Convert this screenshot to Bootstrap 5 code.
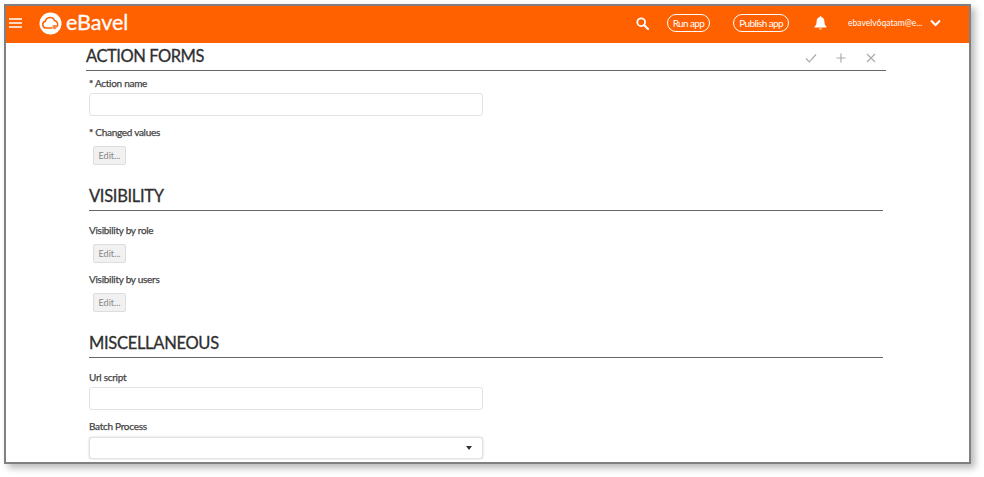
<!DOCTYPE html>
<html lang="en"><head><meta charset="utf-8"><title>eBavel</title>
<link href="https://cdn.jsdelivr.net/npm/bootstrap@5.3.0/dist/css/bootstrap.min.css" rel="stylesheet">
<style>
html,body{margin:0;background:#fff;height:477px;overflow:hidden}
body{font-family:Lato,"Liberation Sans",sans-serif;color:#333}
.shot-frame{width:967px;height:460px;margin:4px 0 0 4px;border:2px solid #808080;box-shadow:4px 4px 7px rgba(0,0,0,.28);overflow:hidden;background:#fff}
.top-bar{height:37px;background:#ff6000;color:#fff;padding:0 0 3px 3px}
.burger{width:13px;margin-right:17px}
.brand-name{font-size:21.5px;font-weight:400;margin-left:4px;line-height:1;-webkit-text-stroke:.3px #fff}
.pill-link{border:1px solid #fff;border-radius:10px;color:#fff;font-size:10px;letter-spacing:-.62px;line-height:16px;height:18px;padding:0 5px;background:transparent}
.user-name{font-size:8.5px;width:76px;white-space:nowrap}
.page-body{padding:0 0 0 80px;width:881px}
.title-row{height:28px;border-bottom:1px solid #666;width:800px}
.title-row h2{font-size:16.5px;letter-spacing:-.45px;font-weight:400;line-height:26px;margin:-2px 0 0;color:#2f2f2f;-webkit-text-stroke:.3px #2f2f2f}
.sub-head{margin:0 0 0 3px;width:794px;border-bottom:1px solid #666;font-size:16.5px;letter-spacing:-.3px;font-weight:400;line-height:27px;height:28px;color:#2f2f2f;-webkit-text-stroke:.3px #2f2f2f}
.field-label{font-size:10px;letter-spacing:-.28px;font-weight:400;-webkit-text-stroke:.25px #444;line-height:13px;margin:0 0 0 3px;color:#444;display:block}
.field-box{display:block;width:394px;height:23px;margin-left:3px;border:1px solid #e2e2e2;border-radius:3px;background:#fff}
.select-box{box-shadow:0 0 2px rgba(0,0,0,.22);position:relative;height:22px}
.select-box::after{content:"";position:absolute;right:10px;top:8px;border:3.5px solid transparent;border-top:4px solid #333;border-bottom:0}
.edit-btn{display:block;margin-left:7px;width:33px;height:19px;padding:0;background:#f1f1f1;border:1px solid #ddd;border-radius:2px;font-size:9px;line-height:17px;color:#888}
.tool-ico{width:12px;height:12px}
</style></head><body>
<div class="shot-frame">
<div class="top-bar d-flex align-items-center">
 <svg class="burger" viewBox="0 0 13 10" height="10"><path d="M0 1h13M0 5h13M0 9h13" stroke="#fff" stroke-width="1.5" fill="none"/></svg>
 <svg width="23" height="23" viewBox="0 0 23 23"><circle cx="11.500" cy="11.500" r="11" fill="#fff"/><path d="M7 16a3.400 3.400 0 0 1-.6-6.700A4.800 4.800 0 0 1 15.500 8.500a3.800 3.800 0 0 1 2 6.500" fill="none" stroke="#ff6000" stroke-width="1.500"/><path d="M7 16h6" stroke="#ff6000" stroke-width="1.500"/><circle cx="15.500" cy="15" r="2.300" fill="#f58a4c"/></svg>
 <span class="brand-name">eBavel</span>
 <div class="ms-auto d-flex align-items-center">
  <svg width="13" height="13" viewBox="0 0 13 13"><circle cx="5.200" cy="5.200" r="3.900" fill="none" stroke="#fff" stroke-width="1.800"/><path d="M8 8l4 4" stroke="#fff" stroke-width="2.200" stroke-linecap="round"/></svg>
  <span class="pill-link" style="margin-left:18px">Run app</span>
  <span class="pill-link" style="margin-left:23px">Publish app</span>
  <svg width="15" height="16" viewBox="0 0 15 16" style="margin-left:24px"><path d="M7.500 1.200c.7 0 1 .4 1 1 2 .5 2.900 2.100 2.900 4.100 0 3 .8 4.200 2.100 5.400v.8H1.500v-.8c1.300-1.200 2.100-2.400 2.100-5.400 0-2 .9-3.600 2.900-4.100 0-.6.3-1 1-1z" fill="#fff"/><path d="M5.800 13.500a1.800 1.600 0 0 0 3.400 0z" fill="#fff"/></svg>
  <span class="user-name" style="margin-left:20px">ebavelv6qatam@e...</span>
  <svg width="11" height="8" viewBox="0 0 11 8" style="margin-left:6px;margin-right:28px"><path d="M1 1.500l4.500 4.500L10 1.500" fill="none" stroke="#fff" stroke-width="2"/></svg>
 </div>
</div>
<div class="page-body">
 <div class="title-row d-flex justify-content-between align-items-center">
  <h2>ACTION FORMS</h2>
  <div class="d-flex align-items-center" style="gap:18px;padding:3px 9px 0 0">
   <svg class="tool-ico" viewBox="0 0 12 12"><path d="M1 6.500l3.300 3.300L11 2.500" fill="none" stroke="#aaa" stroke-width="1.200"/></svg>
   <svg class="tool-ico" viewBox="0 0 12 12"><path d="M6 1.500v9M1.500 6h9" fill="none" stroke="#aaa" stroke-width="1.200"/></svg>
   <svg class="tool-ico" viewBox="0 0 12 12"><path d="M2 2l8 8M10 2l-8 8" fill="none" stroke="#aaa" stroke-width="1.200"/></svg>
  </div>
 </div>
 <div style="height:6px"></div>
 <label class="field-label">* Action name</label>
 <div style="height:3px"></div>
 <input class="field-box" type="text" aria-label="Action name">
 <div style="height:10px"></div>
 <label class="field-label">* Changed values</label>
 <div style="height:7px"></div>
 <button class="edit-btn" type="button">Edit...</button>
 <div style="height:18px"></div>
 <h3 class="sub-head">VISIBILITY</h3>
 <div style="height:13px"></div>
 <label class="field-label">Visibility by role</label>
 <div style="height:7px"></div>
 <button class="edit-btn" type="button">Edit...</button>
 <div style="height:10px"></div>
 <label class="field-label">Visibility by users</label>
 <div style="height:7px"></div>
 <button class="edit-btn" type="button">Edit...</button>
 <div style="height:18px"></div>
 <h3 class="sub-head">MISCELLANEOUS</h3>
 <div style="height:13px"></div>
 <label class="field-label">Url script</label>
 <div style="height:3px"></div>
 <input class="field-box" type="text" aria-label="Url script">
 <div style="height:10px"></div>
 <label class="field-label">Batch Process</label>
 <div style="height:4px"></div>
 <div class="field-box select-box"></div>
</div>
</div>
<script src="https://cdn.jsdelivr.net/npm/bootstrap@5.3.0/dist/js/bootstrap.bundle.min.js"></script>
</body></html>
